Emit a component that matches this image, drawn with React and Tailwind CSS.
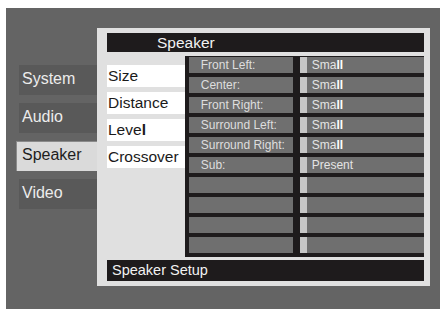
import React from "react";

const menu = ["System", "Audio", "Speaker", "Video"];
const items = ["Size", "Distance", "Level", "Crossover"];
const rows = [
  ["Front Left:", "Small"],
  ["Center:", "Small"],
  ["Front Right:", "Small"],
  ["Surround Left:", "Small"],
  ["Surround Right:", "Small"],
  ["Sub:", "Present"],
  ["", ""],
  ["", ""],
  ["", ""],
  ["", ""],
];

const Value = ({ text }) => {
  if (text === "Small") {
    return (
      <>
        Sma<span className="font-bold text-white">ll</span>
      </>
    );
  }
  return text;
};

const App = () => {
  return (
    <div
      className="w-[440px] h-[309px] bg-white pl-[6px] pt-[8px] flex"
      style={{ fontFamily: '"Liberation Sans", Arial, sans-serif' }}
    >
      <div className="flex-1 bg-[#646464] flex items-start pl-[10px] pt-[20px]">
        {/* side menu */}
        <div className="w-[81px] mt-[37px] flex flex-col gap-[8px]">
          {menu.map((m) =>
            m === "Speaker" ? (
              <div
                key={m}
                className="h-[30px] bg-[#dadada] border-t border-l border-[#8a8a8a] pl-[5px] pt-[3px] text-[16px] leading-[20px] text-[#1e1e1e]"
              >
                {m}
              </div>
            ) : (
              <div
                key={m}
                className="ml-[3px] h-[30px] bg-[#595959] pl-[3px] pt-[4px] text-[16px] leading-[20px] text-[#ececec]"
              >
                {m}
              </div>
            )
          )}
        </div>

        {/* main panel */}
        <div className="w-[333px] h-[258px] bg-[#e0e0e0] pl-[10px] pr-[6px] pt-[5px] pb-[5px] flex flex-col">
          <div className="h-[19px] bg-[#1e1b1c] pl-[50px] text-[15.5px] leading-[19px] text-[#f2f2f2]">
            Speaker
          </div>

          <div className="mt-[4px] h-[201px] flex">
            <div className="w-[78px] pt-[9px] flex flex-col gap-[5px]">
              {items.map((it) => (
                <div
                  key={it}
                  className="h-[22px] bg-white pl-[1px] text-[15.5px] leading-[22px] text-[#1a1a1a]"
                >
                  {it === "Level" ? (
                    <>
                      Leve<span className="font-bold">l</span>
                    </>
                  ) : (
                    it
                  )}
                </div>
              ))}
            </div>

            <div className="w-[240px] bg-[#1e1b1c] pl-[4px] pt-px pb-[4px] flex flex-col gap-[4px]">
              {rows.map(([label, value], i) => (
                <div key={i} className="h-[16px] flex">
                  <div className="w-[104px] bg-[#6f6f6f] pl-[12px] text-[12px] leading-[16px] text-[#dedede]">
                    {label}
                  </div>
                  <div className="ml-[7px] flex-1 bg-[#6f6f6f] border-l-[7px] border-[#c6c6c6] pl-[5px] text-[12px] leading-[16px] text-[#e4e4e4]">
                    <Value text={value} />
                  </div>
                </div>
              ))}
            </div>
          </div>

          <div className="mt-[3px] h-[21px] bg-[#1e1b1c] pl-[5px] text-[14.5px] leading-[21px] text-[#f2f2f2]">
            Speaker Setup
          </div>
        </div>
      </div>
    </div>
  );
};

export default App;
